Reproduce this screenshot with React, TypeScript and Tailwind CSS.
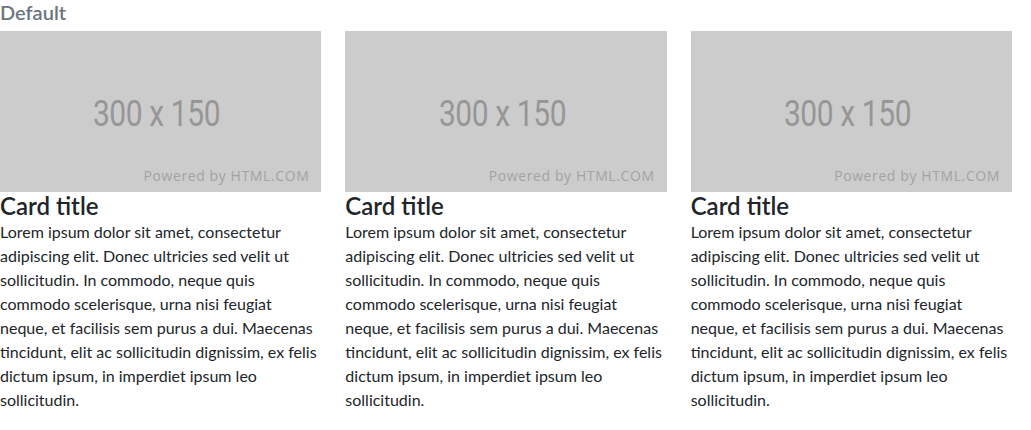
import React from "react";

const body =
  "Lorem ipsum dolor sit amet, consectetur adipiscing elit. Donec ultricies sed velit ut sollicitudin. In commodo, neque quis commodo scelerisque, urna nisi feugiat neque, et facilisis sem purus a dui. Maecenas tincidunt, elit ac sollicitudin dignissim, ex felis dictum ipsum, in imperdiet ipsum leo sollicitudin.";

const Placeholder = () => (
  <div className="relative flex items-center justify-center w-full aspect-[2/1] bg-[#cccccc]">
    <span className="mt-1 mr-2 text-[37px] leading-none text-[#969696] font-['Roboto',sans-serif] tracking-[-0.5px] scale-x-[0.81]">
      300 x 150
    </span>
    <span className="absolute right-3 bottom-[9px] text-[14px] leading-none tracking-[0.6px] text-[#a3a3a3] font-['Open_Sans',sans-serif]">
      Powered by HTML.COM
    </span>
  </div>
);

const Card = () => (
  <div className="flex flex-col">
    <Placeholder />
    <h5 className="text-[24px] leading-[1.2] font-semibold text-[#212529]">Card title</h5>
    <p className="text-[16px] leading-[24px] text-[#212529]">{body}</p>
  </div>
);

export default function App() {
  return (
    <div className="w-[1012px] bg-white font-['Lato',sans-serif]">
      <h6 className="text-[20px] leading-[1.2] font-semibold text-[#6c757d] mb-[7px]">Default</h6>
      <div className="grid grid-cols-3 gap-6">
        <Card />
        <Card />
        <Card />
      </div>
    </div>
  );
}
